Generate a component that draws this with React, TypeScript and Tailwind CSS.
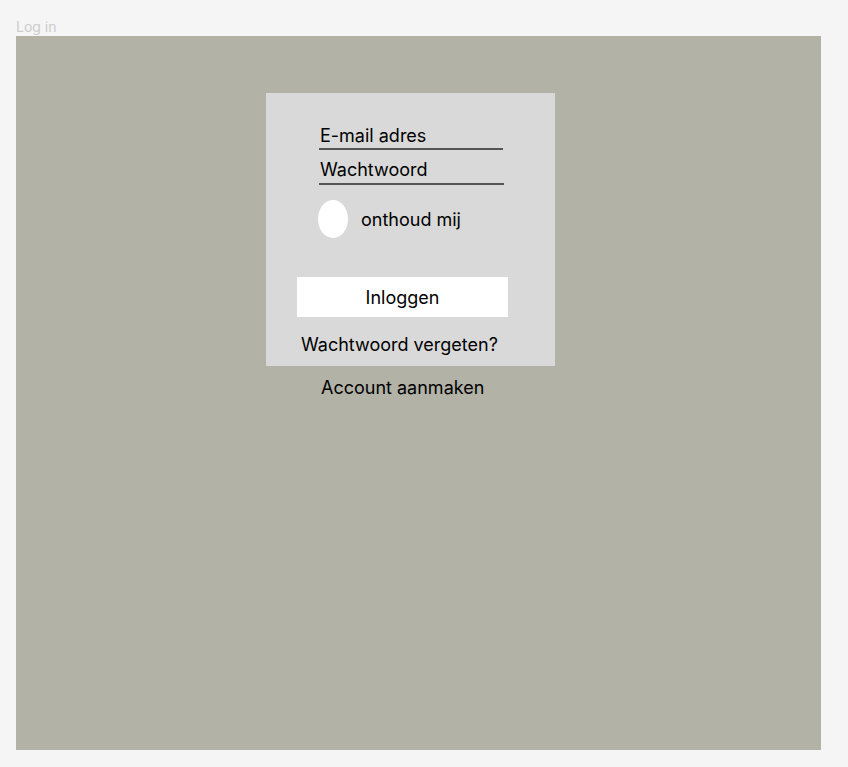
export default function App() {
  return (
    <div className="w-[848px] h-[767px] bg-[#f5f5f5] pl-4 pt-[17px]" style={{ fontFamily: "Inter, 'Noto Sans', sans-serif" }}>
      <div className="text-[14px] leading-[19px] text-[#cccccc] h-[19px]">Log in</div>
      <div className="w-[805px] h-[714px] bg-[#b2b2a6] pl-[250px] pt-[57px]">
        <div className="w-[289px] h-[273px] bg-[#d9d9d9] flex flex-col">
          <div className="ml-[53px] mt-[32px] w-[184px] border-b-2 border-[#555555] pl-[1px] text-[18px] leading-[22px] text-black h-[25px]">E-mail adres</div>
          <div className="ml-[53px] mt-[9px] w-[185px] border-b-2 border-[#555555] pl-[1px] text-[18px] leading-[22px] text-black h-[26px]">Wachtwoord</div>
          <div className="ml-[52px] mt-[15px] flex items-start">
            <div className="w-[30px] h-[38px] rounded-[50%] bg-white" />
            <span className="ml-[13px] mt-[9px] text-[18px] leading-[22px] text-black">onthoud mij</span>
          </div>
          <div className="ml-[31px] mt-[39px] w-[211px] h-[40px] bg-white flex items-center justify-center text-[18px] text-black">Inloggen</div>
          <div className="mt-[17px] ml-[35px] text-[18px] leading-[22px] text-black">Wachtwoord vergeten?</div>
        </div>
        <div className="w-[289px] mt-[11px] pl-[55px] text-[18px] leading-[22px] text-black">Account aanmaken</div>
      </div>
    </div>
  );
}
